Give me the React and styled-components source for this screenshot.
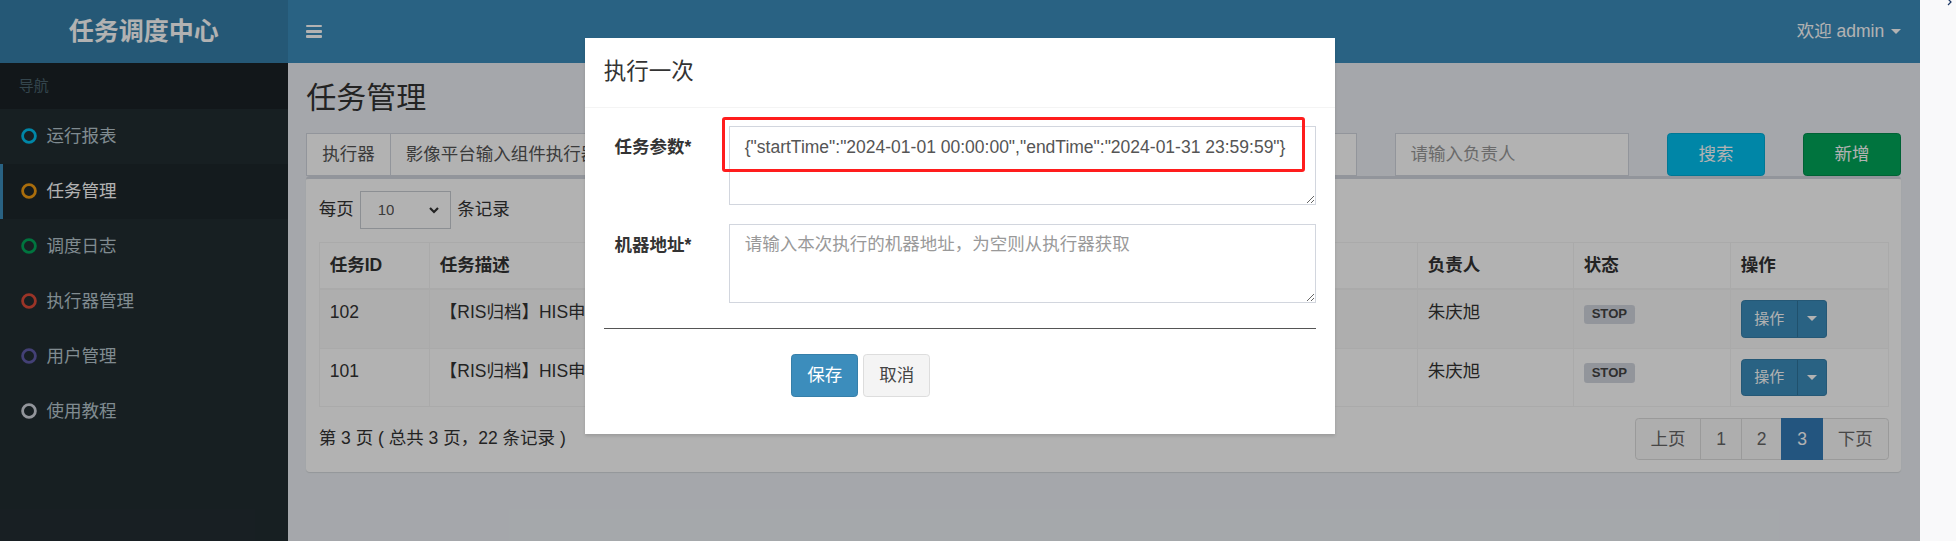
import React from "react";
import styled, { createGlobalStyle } from "styled-components";

const GlobalStyle = createGlobalStyle`
  html, body { margin: 0; padding: 0; }
  body {
    font-family: "Liberation Sans", "Noto Sans CJK SC", sans-serif;
    font-size: 17.5px;
    line-height: 25px;
    color: #333;
    overflow: hidden;
    background: #f9f9fa;
  }
  * { box-sizing: border-box; }
`;

const Screen = styled.div`
  display: flex;
  width: 1956px;
  height: 541px;
  overflow: hidden;
`;

const AppFrame = styled.div`
  position: relative;
  width: 1920px;
  height: 541px;
  flex: none;
  display: flex;
  flex-direction: column;
  background: #ecf0f5;
  overflow: hidden;
`;

const SideStrip = styled.div`
  flex: 1;
  height: 541px;
  background: #f9f9fa;
  display: flex;
  justify-content: flex-end;
  align-items: flex-start;
  padding-right: 3px;
`;

const TopBar = styled.header`
  display: flex;
  height: 62.5px;
  flex: none;
  background: #3c8dbc;
`;

const Logo = styled.div`
  width: 287.5px;
  flex: none;
  background: #367fa9;
  color: #fff;
  font-size: 25px;
  font-weight: 700;
  display: flex;
  align-items: center;
  justify-content: center;
`;

const Navbar = styled.nav`
  flex: 1;
  display: flex;
  align-items: center;
  justify-content: space-between;
  padding: 0 18.75px;
`;

const SidebarToggle = styled.span`
  width: 16px;
  height: 13px;
  display: flex;
  flex-direction: column;
  justify-content: space-between;
`;

const ToggleBar = styled.span`
  display: block;
  height: 2.6px;
  background: #fff;
  border-radius: 1px;
`;

const UserMenu = styled.div`
  display: flex;
  align-items: center;
  gap: 7px;
  color: #fff;
  font-size: 17.5px;
`;

const Caret = styled.span`
  display: inline-block;
  width: 0;
  height: 0;
  border-top: 5px solid ${(p) => p.$color || "#fff"};
  border-left: 5px solid transparent;
  border-right: 5px solid transparent;
`;

const Main = styled.div`
  flex: 1;
  display: flex;
  min-height: 0;
`;

const Sidebar = styled.aside`
  width: 287.5px;
  flex: none;
  background: #222d32;
`;

const SideHeader = styled.div`
  background: #1a2226;
  color: #4b646f;
  font-size: 15px;
  line-height: 21.4px;
  padding: 12.5px 31.25px 12.5px 18.75px;
`;

const Menu = styled.ul`
  list-style: none;
  margin: 0;
  padding: 0;
`;

const MenuItem = styled.li`
  display: flex;
  align-items: center;
  height: 55px;
  padding: 0 18.75px 0 18px;
  border-left: 3.75px solid ${(p) => (p.$active ? "#3c8dbc" : "transparent")};
  background: ${(p) => (p.$active ? "#1e282c" : "transparent")};
  color: ${(p) => (p.$active ? "#fff" : "#b8c7ce")};
  font-size: 17.5px;
`;

const IconSlot = styled.span`
  width: 25.5px;
  flex: none;
  display: flex;
  align-items: center;
`;

const Content = styled.div`
  flex: 1;
  min-width: 0;
  display: flex;
  flex-direction: column;
`;

const ContentHeader = styled.div`
  padding: 18.75px 18.75px 0;
`;

const PageTitle = styled.h1`
  margin: 0;
  font-size: 30px;
  line-height: 33px;
  font-weight: 400;
  color: #333;
`;

const Section = styled.section`
  padding: 18.75px;
`;

const FilterRow = styled.div`
  display: grid;
  grid-template-columns: repeat(12, 1fr);
  column-gap: 37.5px;
`;

const Field = styled.div`
  grid-column: span ${(p) => p.$span};
  min-width: 0;
`;

const InputGroup = styled.div`
  display: flex;
  height: 42.5px;
`;

const Addon = styled.span`
  flex: none;
  display: flex;
  align-items: center;
  padding: 0 15px;
  border: 1.25px solid #d2d6de;
  border-right: 0;
  background: #fff;
  color: #555;
`;

const SelectLike = styled.div`
  flex: 1;
  min-width: 0;
  height: ${(p) => p.$h || "42.5px"};
  display: flex;
  align-items: center;
  justify-content: space-between;
  gap: 6px;
  padding: ${(p) => p.$pad || "0 12px 0 15px"};
  border: 1.25px solid #d2d6de;
  background: #fff;
  color: #555;
  font-size: ${(p) => p.$fs || "17.5px"};
  white-space: nowrap;
  overflow: hidden;
`;

const SelectText = styled.span`
  overflow: hidden;
  text-overflow: clip;
`;

const TextInput = styled.input`
  display: block;
  width: 100%;
  height: 42.5px;
  padding: 7.5px 15px;
  border: 1.25px solid #d2d6de;
  border-radius: 0;
  background: #fff;
  color: #555;
  font: inherit;
  font-size: 17.5px;
  outline: none;
  &::placeholder { color: #999; }
`;

const ActionButton = styled.button`
  display: block;
  width: 100%;
  height: 42.5px;
  border-radius: 3.75px;
  border: 1.25px solid ${(p) => (p.$variant === "success" ? "#008d4c" : "#00acd6")};
  background: ${(p) => (p.$variant === "success" ? "#00a65a" : "#00c0ef")};
  color: #fff;
  font: inherit;
  font-size: 17.5px;
  padding: 0;
`;

const Box = styled.div`
  background: #fff;
  border-top: 3.75px solid #d2d6de;
  border-radius: 3.75px;
  box-shadow: 0 1px 1px rgba(0, 0, 0, 0.1);
`;

const BoxBody = styled.div`
  padding: 12.5px 12.5px 3px;
`;

const LengthRow = styled.div`
  display: flex;
  align-items: center;
  gap: 6px;
  height: 37.5px;
`;

const LengthSelect = styled(SelectLike)`
  flex: none;
  width: 91.6px;
  border-color: #c9cdd3;
`;

const Table = styled.table`
  width: 100%;
  margin-top: 13.7px;
  border-collapse: collapse;
  table-layout: fixed;
  border: 1.25px solid #f4f4f4;
`;

const Th = styled.th`
  width: ${(p) => p.$w};
  padding: 10px;
  text-align: left;
  font-weight: 700;
  line-height: 25px;
  border: 1.25px solid #f4f4f4;
  border-bottom-width: 2.5px;
  white-space: nowrap;
`;

const Tr = styled.tr`
  background: ${(p) => (p.$striped ? "#f9f9f9" : "#fff")};
`;

const Td = styled.td`
  padding: 10px;
  line-height: 25px;
  border: 1.25px solid #f4f4f4;
  vertical-align: top;
  white-space: nowrap;
  overflow: hidden;
`;

const StatusLabel = styled.span`
  display: inline-block;
  background: #d2d6de;
  color: #444;
  font-size: 13.125px;
  font-weight: 700;
  line-height: 1;
  padding: 0.2em 0.6em 0.3em;
  border-radius: 0.25em;
`;

const BtnGroup = styled.div`
  display: inline-flex;
  height: 37.5px;
`;

const GroupButton = styled.button`
  display: flex;
  align-items: center;
  justify-content: center;
  height: 37.5px;
  background: #3c8dbc;
  border: 1.25px solid #367fa9;
  color: #fff;
  font: inherit;
  font-size: 15px;
  line-height: 22.5px;
  padding: 0 ${(p) => (p.$caret ? "9px" : "12.5px")};
  margin-left: ${(p) => (p.$caret ? "-1.25px" : "0")};
  border-radius: ${(p) => (p.$caret ? "0 3.75px 3.75px 0" : "3.75px 0 0 3.75px")};
  border-left-color: ${(p) => (p.$caret ? "#2f749c" : "#367fa9")};
`;

const TableFooter = styled.div`
  display: flex;
  justify-content: space-between;
  align-items: flex-start;
  margin-top: 11px;
  margin-bottom: 9px;
`;

const InfoText = styled.div`
  padding-top: 7.5px;
  color: #333;
`;

const Pager = styled.ul`
  display: flex;
  list-style: none;
  margin: 0;
  padding: 0;
`;

const PageItem = styled.li`
  padding: 7.5px 15px;
  line-height: 25px;
  border: 1.25px solid ${(p) => (p.$active ? "#337ab7" : "#ddd")};
  margin-left: -1.25px;
  background: ${(p) => (p.$active ? "#337ab7" : "#fafafa")};
  color: ${(p) => (p.$active ? "#fff" : "#666")};
  position: ${(p) => (p.$active ? "relative" : "static")};
  &:first-child {
    margin-left: 0;
    border-radius: 3.75px 0 0 3.75px;
  }
  &:last-child {
    border-radius: 0 3.75px 3.75px 0;
  }
`;

const Backdrop = styled.div`
  position: absolute;
  inset: 0;
  background: rgba(0, 0, 0, 0.3);
`;

const ModalLayer = styled.div`
  position: absolute;
  inset: 0;
`;

const Dialog = styled.div`
  width: 750px;
  margin: 37.5px auto 0;
  background: #fff;
  box-shadow: 0 2px 3px rgba(0, 0, 0, 0.125);
`;

const ModalHeader = styled.div`
  padding: 18.75px;
  border-bottom: 1.25px solid #f4f4f4;
`;

const ModalTitle = styled.h4`
  margin: 0;
  font-size: 22.5px;
  line-height: 31.5px;
  font-weight: 400;
  color: #333;
`;

const ModalBody = styled.div`
  padding: 18.75px;
`;

const FormGroup = styled.div`
  display: grid;
  grid-template-columns: 87.5px 1fr;
  column-gap: 37.5px;
  margin-bottom: 18.75px;
`;

const FormLabel = styled.label`
  text-align: right;
  font-weight: 700;
  padding-top: 8.75px;
  line-height: 25px;
  color: #333;
  white-space: nowrap;
`;

const Control = styled.div`
  position: relative;
`;

const TextArea = styled.textarea`
  display: block;
  width: 100%;
  height: 78.75px;
  padding: 7.5px 15px;
  border: 1.25px solid #d2d6de;
  border-radius: 0;
  font-family: "Liberation Sans", "Noto Sans CJK SC", sans-serif;
  font-size: 17.5px;
  line-height: 25px;
  color: #555;
  outline: none;
  &::placeholder { color: #999; }
`;

const Highlight = styled.div`
  position: absolute;
  left: -6.75px;
  top: -9px;
  width: 583px;
  height: 55px;
  border: 3px solid #ff1d1d;
  border-radius: 3px;
  pointer-events: none;
`;

const Rule = styled.hr`
  margin: 25.75px 0 25px;
  border: 0;
  border-top: 1px solid #555;
`;

const ButtonRow = styled.div`
  display: flex;
  gap: 5px;
  padding-left: 187.5px;
  margin-bottom: 18.75px;
`;

const FormButton = styled.button`
  height: 42.5px;
  padding: 0 15px;
  border-radius: 3.75px;
  font: inherit;
  font-size: 17.5px;
  border: 1.25px solid ${(p) => (p.$primary ? "#367fa9" : "#ddd")};
  background: ${(p) => (p.$primary ? "#3c8dbc" : "#f4f4f4")};
  color: ${(p) => (p.$primary ? "#fff" : "#444")};
`;

const Ring = ({ color }) => (
  <svg width="16" height="16" viewBox="0 0 16 16">
    <circle cx="8" cy="8" r="6.4" fill="none" stroke={color} strokeWidth="2.8" />
  </svg>
);

const Chevron = ({ size = 12, color = "#333", width = 2 }) => (
  <svg width={size} height={size} viewBox="0 0 12 12">
    <polyline points="2,4 6,8 10,4" fill="none" stroke={color} strokeWidth={width} />
  </svg>
);

const menu = [
  { label: "运行报表", color: "#00c0ef" },
  { label: "任务管理", color: "#f39c12", active: true },
  { label: "调度日志", color: "#00a65a" },
  { label: "执行器管理", color: "#dd4b39" },
  { label: "用户管理", color: "#605ca8" },
  { label: "使用教程", color: "#d2d6de" },
];

const columns = [
  { title: "任务ID", w: "110px" },
  { title: "任务描述", w: "400px" },
  { title: "", w: "300px" },
  { title: "", w: "288px" },
  { title: "负责人", w: "156px" },
  { title: "状态", w: "157px" },
  { title: "操作", w: "158.5px" },
];

const rows = [
  { id: 102, desc: "【RIS归档】HIS申请单归档", author: "朱庆旭", status: "STOP" },
  { id: 101, desc: "【RIS归档】HIS申请单同步", author: "朱庆旭", status: "STOP" },
];

const pages = [
  { label: "上页" },
  { label: "1" },
  { label: "2" },
  { label: "3", active: true },
  { label: "下页" },
];

export default function App() {
  return (
    <>
      <GlobalStyle />
      <Screen>
        <AppFrame>
          <TopBar>
            <Logo>任务调度中心</Logo>
            <Navbar>
              <SidebarToggle>
                <ToggleBar />
                <ToggleBar />
                <ToggleBar />
              </SidebarToggle>
              <UserMenu>
                欢迎 admin <Caret />
              </UserMenu>
            </Navbar>
          </TopBar>
          <Main>
            <Sidebar>
              <SideHeader>导航</SideHeader>
              <Menu>
                {menu.map((m) => (
                  <MenuItem key={m.label} $active={m.active}>
                    <IconSlot>
                      <Ring color={m.color} />
                    </IconSlot>
                    {m.label}
                  </MenuItem>
                ))}
              </Menu>
            </Sidebar>
            <Content>
              <ContentHeader>
                <PageTitle>任务管理</PageTitle>
              </ContentHeader>
              <Section>
                <FilterRow>
                  <Field $span={3}>
                    <InputGroup>
                      <Addon>执行器</Addon>
                      <SelectLike>
                        <SelectText>影像平台输入组件执行器</SelectText>
                        <Chevron />
                      </SelectLike>
                    </InputGroup>
                  </Field>
                  <Field $span={1}>
                    <SelectLike>
                      <SelectText>全部</SelectText>
                      <Chevron />
                    </SelectLike>
                  </Field>
                  <Field $span={2}>
                    <TextInput placeholder="请输入任务描述" />
                  </Field>
                  <Field $span={2}>
                    <TextInput placeholder="请输入JobHandler" />
                  </Field>
                  <Field $span={2}>
                    <TextInput placeholder="请输入负责人" />
                  </Field>
                  <Field $span={1}>
                    <ActionButton $variant="info">搜索</ActionButton>
                  </Field>
                  <Field $span={1}>
                    <ActionButton $variant="success">新增</ActionButton>
                  </Field>
                </FilterRow>
                <Box>
                  <BoxBody>
                    <LengthRow>
                      每页
                      <LengthSelect $h="37.5px" $fs="15px" $pad="0 10px 0 17px">
                        <SelectText>10</SelectText>
                        <Chevron size={12} color="#333" width={2.2} />
                      </LengthSelect>
                      条记录
                    </LengthRow>
                    <Table>
                      <thead>
                        <tr>
                          {columns.map((c, i) => (
                            <Th key={i} $w={c.w}>
                              {c.title}
                            </Th>
                          ))}
                        </tr>
                      </thead>
                      <tbody>
                        {rows.map((r, i) => (
                          <Tr key={r.id} $striped={i % 2 === 0}>
                            <Td>{r.id}</Td>
                            <Td>{r.desc}</Td>
                            <Td />
                            <Td />
                            <Td>{r.author}</Td>
                            <Td>
                              <StatusLabel>{r.status}</StatusLabel>
                            </Td>
                            <Td>
                              <BtnGroup>
                                <GroupButton>操作</GroupButton>
                                <GroupButton $caret>
                                  <Caret />
                                </GroupButton>
                              </BtnGroup>
                            </Td>
                          </Tr>
                        ))}
                      </tbody>
                    </Table>
                    <TableFooter>
                      <InfoText>第 3 页 ( 总共 3 页，22 条记录 )</InfoText>
                      <Pager>
                        {pages.map((p) => (
                          <PageItem key={p.label} $active={p.active}>
                            {p.label}
                          </PageItem>
                        ))}
                      </Pager>
                    </TableFooter>
                  </BoxBody>
                </Box>
              </Section>
            </Content>
          </Main>
          <Backdrop />
          <ModalLayer>
            <Dialog>
              <ModalHeader>
                <ModalTitle>执行一次</ModalTitle>
              </ModalHeader>
              <ModalBody>
                <FormGroup>
                  <FormLabel>任务参数*</FormLabel>
                  <Control>
                    <TextArea
                      readOnly
                      defaultValue={'{"startTime":"2024-01-01 00:00:00","endTime":"2024-01-31 23:59:59"}'}
                    />
                    <Highlight />
                  </Control>
                </FormGroup>
                <FormGroup>
                  <FormLabel>机器地址*</FormLabel>
                  <Control>
                    <TextArea placeholder="请输入本次执行的机器地址，为空则从执行器获取" />
                  </Control>
                </FormGroup>
                <Rule />
                <ButtonRow>
                  <FormButton $primary>保存</FormButton>
                  <FormButton>取消</FormButton>
                </ButtonRow>
              </ModalBody>
            </Dialog>
          </ModalLayer>
        </AppFrame>
        <SideStrip>
          <svg width="6" height="8" viewBox="0 0 6 8" style={{ marginTop: -1 }}>
            <polyline points="1,0 4,3 1,6" fill="none" stroke="#1f3a66" strokeWidth="1.2" />
          </svg>
        </SideStrip>
      </Screen>
    </>
  );
}
